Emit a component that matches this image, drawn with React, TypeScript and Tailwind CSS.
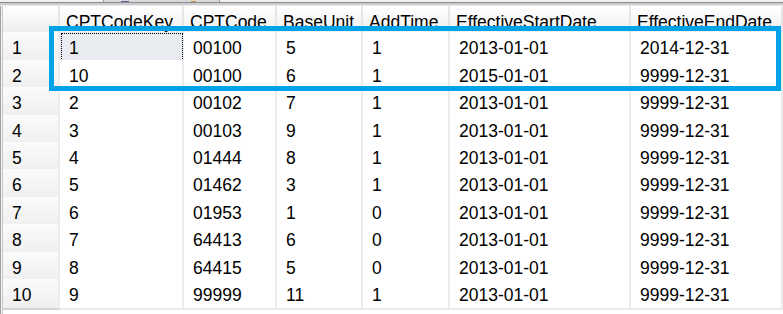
import React from "react";

type Row = {
  key: string;
  code: string;
  base: string;
  add: string;
  start: string;
  end: string;
};

const rows: Row[] = [
  { key: "1", code: "00100", base: "5", add: "1", start: "2013-01-01", end: "2014-12-31" },
  { key: "10", code: "00100", base: "6", add: "1", start: "2015-01-01", end: "9999-12-31" },
  { key: "2", code: "00102", base: "7", add: "1", start: "2013-01-01", end: "9999-12-31" },
  { key: "3", code: "00103", base: "9", add: "1", start: "2013-01-01", end: "9999-12-31" },
  { key: "4", code: "01444", base: "8", add: "1", start: "2013-01-01", end: "9999-12-31" },
  { key: "5", code: "01462", base: "3", add: "1", start: "2013-01-01", end: "9999-12-31" },
  { key: "6", code: "01953", base: "1", add: "0", start: "2013-01-01", end: "9999-12-31" },
  { key: "7", code: "64413", base: "6", add: "0", start: "2013-01-01", end: "9999-12-31" },
  { key: "8", code: "64415", base: "5", add: "0", start: "2013-01-01", end: "9999-12-31" },
  { key: "9", code: "99999", base: "11", add: "1", start: "2013-01-01", end: "9999-12-31" },
];

const headers = [
  "CPTCodeKey",
  "CPTCode",
  "BaseUnit",
  "AddTime",
  "EffectiveStartDate",
  "EffectiveEndDate",
];

const gridCols = "grid grid-cols-[57px_124px_93px_86px_87px_181px_1fr]";

const HeaderCell = ({ text }: { text: string }) => (
  <div className="flex items-center pl-[6px] pt-[5px] border-r-2 border-[#e6e6e6] bg-gradient-to-b from-white to-[#f0f0f0] whitespace-nowrap overflow-hidden">
    {text}
  </div>
);

const Cell = ({ text, selected }: { text: string; selected?: boolean }) => (
  <div
    className={`flex items-center pl-[9px] pt-[3px] border-r-2 border-b-2 border-[#ececec] whitespace-nowrap overflow-hidden ${
      selected ? "bg-[#e8ecf0] outline-1 outline-dotted outline-black -outline-offset-2" : "bg-white"
    }`}
  >
    {text}
  </div>
);

export default function App() {
  return (
    <div
      className="relative w-[783px] h-[314px] bg-white overflow-hidden text-[17.5px] text-black"
      style={{ fontFamily: '"Liberation Sans", Arial, sans-serif' }}
    >
      {/* toolbar remnant above grid */}
      <div className="h-[6px] flex flex-col">
        <div className="h-[2px] bg-[#f0f0f0] flex">
          <div className="ml-[103px] w-[117px] h-[2px] bg-[#d9d9d9] border-x border-[#a0a0a0] flex items-end">
            <div className="ml-[17px] w-[8px] h-[1px] bg-[#6b5ca5]" />
            <div className="ml-[62px] w-[5px] h-[1px] bg-[#d08a30]" />
          </div>
        </div>
        <div className="h-[1px] bg-[#8e8e8e]" />
        <div className="h-[2px] bg-[#c9cad2]" />
        <div className="h-[1px] bg-[#ebebeb]" />
      </div>

      <div className="flex h-[308px]">
        {/* left frame */}
        <div className="w-[1px] bg-[#a0a0a0]" />
        <div className="w-[1px] bg-[#f4f4f4]" />
        <div className="w-[1px] bg-[#c8c8c8]" />

        <div className="flex-1 flex flex-col">
          <div className={`${gridCols} h-[26.3px]`}>
            <div className="border-r-2 border-[#e6e6e6] bg-gradient-to-b from-white to-[#eeeeee]" />
            {headers.map((h) => (
              <HeaderCell key={h} text={h} />
            ))}
          </div>

          {rows.map((r, i) => (
            <div key={i} className={`${gridCols} h-[27.44px]`}>
              <div className="flex items-center pl-[9px] pt-[3px] bg-gradient-to-b from-[#fbfbfb] to-[#efefef] border-b-2 border-[#d4d4d4] border-r-2 border-r-[#ececec]">
                {i + 1}
              </div>
              <Cell text={r.key} selected={i === 0} />
              <Cell text={r.code} />
              <Cell text={r.base} />
              <Cell text={r.add} />
              <Cell text={r.start} />
              <Cell text={r.end} />
            </div>
          ))}
        </div>
      </div>

      {/* highlight annotation */}
      <div className="absolute left-[49px] top-[26px] w-[732px] h-[65px] border-[5px] border-[#00a2e8]" />
    </div>
  );
}
